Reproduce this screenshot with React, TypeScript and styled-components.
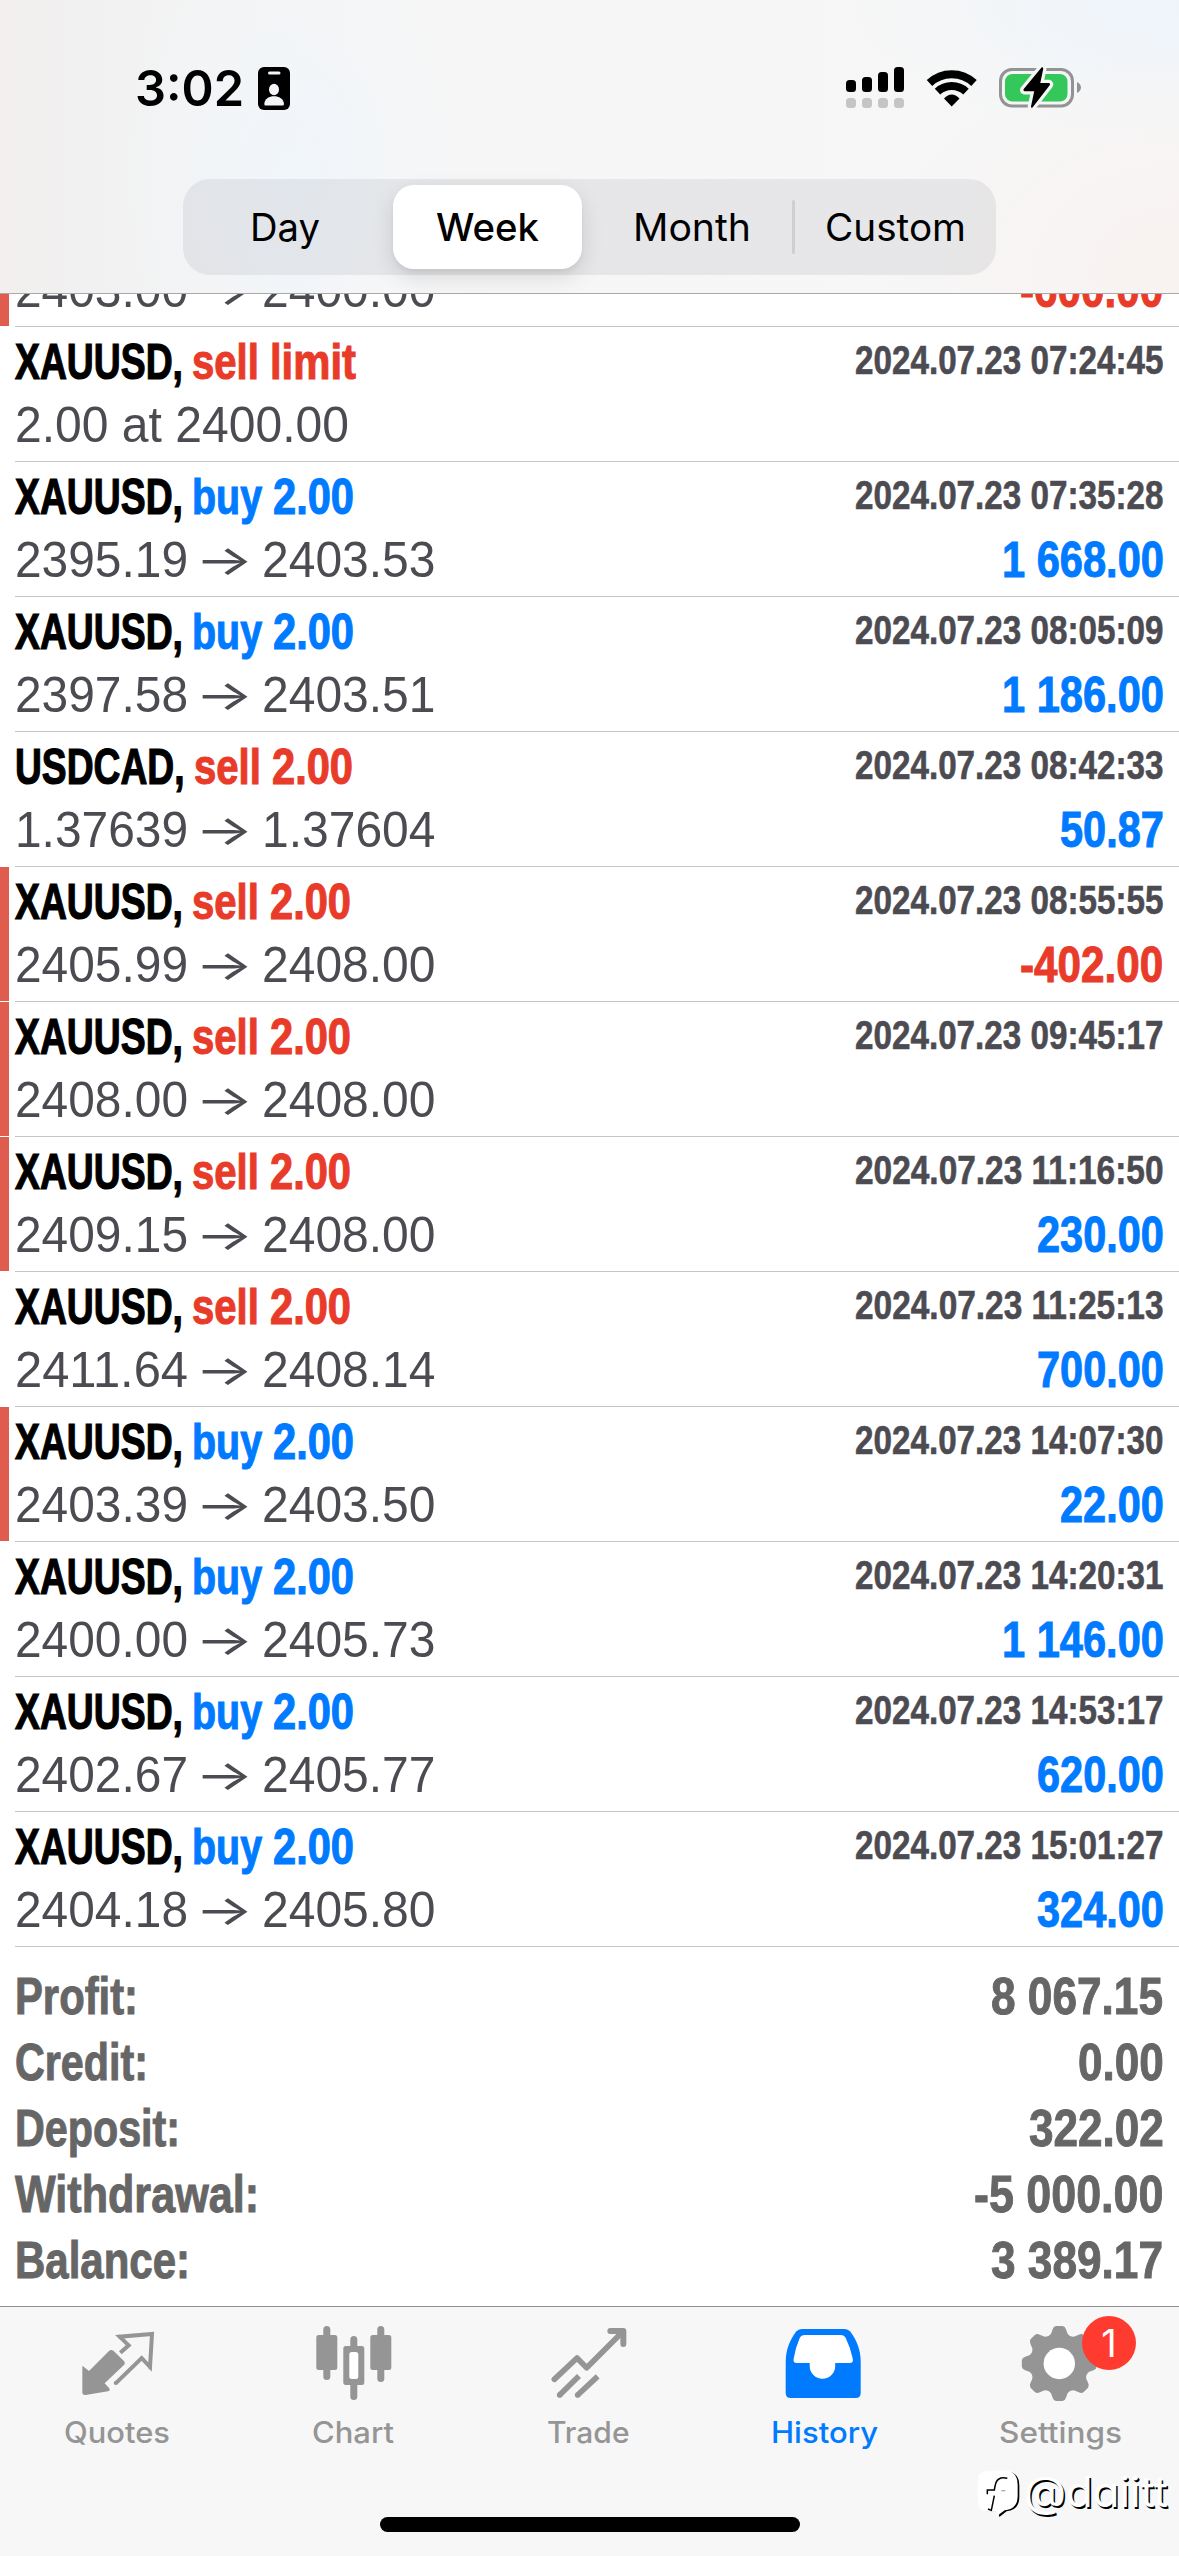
import React, { useLayoutEffect, useRef } from "react";
import styled, { createGlobalStyle } from "styled-components";

const RED = "#e83b2a";
const BLUE = "#007aff";
const SLATE = "#4c4b52";
const GREY = "#666666";
const TAB_GREY = "#959595";

const GlobalStyle = createGlobalStyle`
  *, *::before, *::after { box-sizing: border-box; }
  body { margin: 0; background: #ffffff; }
`;

/* ---------- text fitted to a given advance width ---------- */

const FitBox = styled.span<{ $w: number }>`
  display: inline-block;
  flex: none;
  width: ${(p) => p.$w}px;
  white-space: pre;
  overflow: visible;
`;

const FitInner = styled.span`
  display: inline-block;
  white-space: pre;
  transform-origin: 0 50%;
`;

function Fit({ w, children }: { w: number; children: React.ReactNode }) {
  const ref = useRef<HTMLSpanElement>(null);
  useLayoutEffect(() => {
    const el = ref.current;
    if (!el) return;
    el.style.transform = "none";
    const natural = el.getBoundingClientRect().width;
    el.style.transform = `scaleX(${w / natural})`;
  }, [w, children]);
  return (
    <FitBox $w={w}>
      <FitInner ref={ref}>{children}</FitInner>
    </FitBox>
  );
}

/* Advance width of a condensed numeral string for a given em size. */
function numeralWidth(text: string, em: number) {
  const units: Record<string, number> = { ".": 0.243, " ": 0.25, "-": 0.34 };
  return [...text].reduce((sum, c) => sum + (units[c] ?? 0.48) * em, 0);
}

/* ---------- page ---------- */

const Screen = styled.main`
  width: 1179px;
  height: 2556px;
  display: flex;
  flex-direction: column;
  position: relative;
  overflow: hidden;
  background: #ffffff;
  font-family: "Liberation Sans", Arial, sans-serif;
`;

const Header = styled.header`
  flex: none;
  height: 294px;
  display: flex;
  flex-direction: column;
  border-bottom: 1px solid #a9a9a9;
  font-family: Inter, sans-serif;
  background:
    radial-gradient(ellipse 300px 220px at 1179px 270px, rgba(249, 242, 240, 0.9), rgba(249, 242, 240, 0)),
    radial-gradient(ellipse 330px 150px at 1179px 0, rgba(238, 244, 251, 1), rgba(238, 244, 251, 0)),
    radial-gradient(ellipse 180px 260px at 290px 170px, rgba(241, 246, 251, 1), rgba(241, 246, 251, 0)),
    linear-gradient(90deg, #f2efee 0, #f1f1f1 90px, #f6f6f6 360px, #f7f7f7 100%);
`;

const StatusBar = styled.div`
  height: 179px;
  flex: none;
  display: flex;
  align-items: flex-start;
  padding: 0 97px 0 135px;
`;

const Clock = styled.div`
  height: 176px;
  line-height: 176px;
  font-size: 50px;
  font-weight: 600;
  color: #000;
`;

const IdIcon = styled.svg`
  flex: none;
  margin: 67px 0 0 14px;
`;

const StatusIcons = styled.div`
  margin-left: auto;
  display: flex;
  padding-top: 66px;
  gap: 20px;
`;

const Segments = styled.nav`
  flex: none;
  width: 813px;
  height: 96px;
  margin-left: 183px;
  padding: 6px 0;
  display: flex;
  align-items: center;
  border-radius: 27px;
  background: rgba(118, 118, 128, 0.12);
`;

const Segment = styled.div<{ $active?: boolean; $w: number; $inset?: number }>`
  flex: none;
  width: ${(p) => p.$w}px;
  height: 84px;
  margin-left: ${(p) => (p.$active ? 7 : 0)}px;
  padding-left: ${(p) => p.$inset ?? 0}px;
  display: flex;
  align-items: center;
  justify-content: center;
  border-radius: 21px;
  font-size: 38px;
  line-height: 86px;
  color: #000;
  font-weight: ${(p) => (p.$active ? 540 : 430)};
  background: ${(p) => (p.$active ? "#fff" : "transparent")};
  box-shadow: ${(p) => (p.$active ? "0 8px 22px rgba(0,0,0,.12), 0 4px 5px rgba(0,0,0,.04)" : "none")};
`;

const Divider = styled.div`
  flex: none;
  width: 3px;
  height: 54px;
  border-radius: 2px;
  background: #cfcfd2;
`;

/* ---------- history list ---------- */

const List = styled.section`
  flex: none;
  height: 1653px;
  overflow: hidden;
  display: flex;
  flex-direction: column;
  justify-content: flex-end;
`;

const Row = styled.article`
  flex: none;
  height: 135px;
  display: flex;
`;

const Marker = styled.div<{ $on?: boolean }>`
  flex: none;
  width: 9px;
  height: 134px;
  margin-right: 6px;
  background: ${(p) => (p.$on ? "#df5c4e" : "transparent")};
`;

const RowBody = styled.div`
  flex: 1;
  padding-right: 15.5px;
  border-bottom: 1px solid #c5c5c7;
`;

const TitleLine = styled.div`
  display: flex;
  height: 67px;
  line-height: 69px;
  font-size: 49.5px;
  font-weight: 700;
`;

const Symbol = styled.span`
  color: #000;
  margin-right: 9px;
  -webkit-text-stroke: 1.2px #000;
`;

const Side = styled.span<{ $color: string }>`
  display: flex;
  color: ${(p) => p.$color};
  -webkit-text-stroke: 1.1px ${(p) => p.$color};
`;

const Time = styled.time`
  margin-left: auto;
  font-size: 40px;
  line-height: 67px;
  color: ${SLATE};
  -webkit-text-stroke: 0.6px ${SLATE};
`;

const PriceLine = styled.div`
  display: flex;
  height: 60px;
  margin-left: -0.5px;
  line-height: 62px;
  font-size: 49.5px;
  color: ${SLATE};
`;

const Arrow = styled.span`
  font-family: Inter, sans-serif;
  font-weight: 400;
  font-size: 42px;
  margin: 0 9px 0 7px;
`;

const Amount = styled.span<{ $color: string }>`
  margin-left: auto;
  font-weight: 700;
  color: ${(p) => p.$color};
  -webkit-text-stroke: 1px ${(p) => p.$color};
`;

type Direction = "sell" | "buy";
type Deal = {
  symbol?: string;
  side?: Direction;
  volume?: string;
  time?: string;
  from?: string;
  to?: string;
  note?: string;
  amount?: string;
  marked?: boolean;
};

const deals: Deal[] = [
  { from: "2403.00", to: "2400.00", amount: "-600.00", marked: true },
  { symbol: "XAUUSD", side: "sell", volume: "limit", time: "2024.07.23 07:24:45", note: "2.00 at 2400.00" },
  { symbol: "XAUUSD", side: "buy", volume: "2.00", time: "2024.07.23 07:35:28", from: "2395.19", to: "2403.53", amount: "1 668.00" },
  { symbol: "XAUUSD", side: "buy", volume: "2.00", time: "2024.07.23 08:05:09", from: "2397.58", to: "2403.51", amount: "1 186.00" },
  { symbol: "USDCAD", side: "sell", volume: "2.00", time: "2024.07.23 08:42:33", from: "1.37639", to: "1.37604", amount: "50.87" },
  { symbol: "XAUUSD", side: "sell", volume: "2.00", time: "2024.07.23 08:55:55", from: "2405.99", to: "2408.00", amount: "-402.00", marked: true },
  { symbol: "XAUUSD", side: "sell", volume: "2.00", time: "2024.07.23 09:45:17", from: "2408.00", to: "2408.00", marked: true },
  { symbol: "XAUUSD", side: "sell", volume: "2.00", time: "2024.07.23 11:16:50", from: "2409.15", to: "2408.00", amount: "230.00", marked: true },
  { symbol: "XAUUSD", side: "sell", volume: "2.00", time: "2024.07.23 11:25:13", from: "2411.64", to: "2408.14", amount: "700.00" },
  { symbol: "XAUUSD", side: "buy", volume: "2.00", time: "2024.07.23 14:07:30", from: "2403.39", to: "2403.50", amount: "22.00", marked: true },
  { symbol: "XAUUSD", side: "buy", volume: "2.00", time: "2024.07.23 14:20:31", from: "2400.00", to: "2405.73", amount: "1 146.00" },
  { symbol: "XAUUSD", side: "buy", volume: "2.00", time: "2024.07.23 14:53:17", from: "2402.67", to: "2405.77", amount: "620.00" },
  { symbol: "XAUUSD", side: "buy", volume: "2.00", time: "2024.07.23 15:01:27", from: "2404.18", to: "2405.80", amount: "324.00" },
];

function DealRow({ deal }: { deal: Deal }) {
  const { symbol, side, volume, time, from, to, note, amount, marked } = deal;
  return (
    <Row>
      <Marker $on={marked} />
      <RowBody>
        <TitleLine>
          {symbol && (
            <>
              <Symbol>
                <Fit w={symbol === "USDCAD" ? 169.5 : 168}>{symbol + ","}</Fit>
              </Symbol>
              <Side $color={side === "sell" ? RED : BLUE}>
                <Fit w={side === "sell" ? 78 : 81}>{side + " "}</Fit>
                <Fit w={volume === "limit" ? 86 : 81}>{volume}</Fit>
              </Side>
              <Time>
                <Fit w={308.5}>{time}</Fit>
              </Time>
            </>
          )}
        </TitleLine>
        <PriceLine>
          {note ? (
            <Fit w={334}>{note}</Fit>
          ) : (
            <>
              <Fit w={173}>{from}</Fit>
              <Arrow>
                <Fit w={58.5}>→</Fit>
              </Arrow>
              <Fit w={173.5}>{to}</Fit>
            </>
          )}
          {amount && (
            <Amount $color={amount.startsWith("-") ? RED : BLUE}>
              <Fit w={numeralWidth(amount, 48)}>{amount}</Fit>
            </Amount>
          )}
        </PriceLine>
      </RowBody>
    </Row>
  );
}

/* ---------- summary ---------- */

const Summary = styled.section`
  flex: none;
  height: 359px;
  padding: 16px 15.5px 0 15px;
`;

const SummaryLine = styled.div`
  display: flex;
  justify-content: space-between;
  height: 66px;
  line-height: 66px;
  font-size: 52.5px;
  font-weight: 700;
  color: ${GREY};
  -webkit-text-stroke: 1px ${GREY};
`;

const totals = [
  { label: "Profit:", w: 123, value: "8 067.15" },
  { label: "Credit:", w: 133, value: "0.00" },
  { label: "Deposit:", w: 165, value: "322.02" },
  { label: "Withdrawal:", w: 244, value: "-5 000.00" },
  { label: "Balance:", w: 175, value: "3 389.17" },
];

/* ---------- tab bar ---------- */

const TabBar = styled.footer`
  flex: none;
  height: 250px;
  display: flex;
  flex-direction: column;
  align-items: center;
  background: #f7f7f7;
  border-top: 1px solid #8e8e8e;
  font-family: Inter, sans-serif;
`;

const Tabs = styled.nav`
  width: 100%;
  height: 210px;
  display: flex;
  padding-top: 8px;
`;

const Tab = styled.div<{ $active?: boolean }>`
  flex: 1 1 0;
  display: flex;
  flex-direction: column;
  align-items: center;
  color: ${(p) => (p.$active ? BLUE : TAB_GREY)};
  font-size: 29.5px;
  font-weight: 500;
  line-height: 34px;
`;

const TabLabel = styled.div`
  padding-right: 2px;
`;

const IconBox = styled.div`
  position: relative;
  width: 100px;
  height: 90px;
  margin-bottom: 10px;
`;

const Badge = styled.span`
  position: absolute;
  left: 71px;
  top: 1px;
  width: 54px;
  height: 54px;
  border-radius: 50%;
  background: #ff3b30;
  color: #fff;
  font-size: 38px;
  font-weight: 400;
  line-height: 54px;
  text-align: center;
`;

const HomeIndicator = styled.div`
  width: 420px;
  height: 15px;
  border-radius: 8px;
  background: #000;
`;

const Watermark = styled.div`
  position: absolute;
  left: 976px;
  top: 2467px;
  display: flex;
  font-family: Inter, sans-serif;
  font-size: 42px;
  font-weight: 400;
  line-height: 50px;
  color: #fff;
  font-feature-settings: "cv11" 1;
  text-shadow: 1.5px 1.5px 0.6px #000;
`;

function gearPath(cx: number, cy: number) {
  const pts: string[] = [];
  const at = (deg: number, r: number) => {
    const a = (deg * Math.PI) / 180;
    return `${(cx + r * Math.sin(a)).toFixed(2)} ${(cy - r * Math.cos(a)).toFixed(2)}`;
  };
  for (let i = 0; i < 8; i++) {
    const d = i * 45;
    pts.push(`${i ? "L" : "M"}${at(d - 15.5, 31)}`);
    pts.push(`L${at(d - 11, 34.8)} Q${at(d - 9, 37.5)} ${at(d - 5, 37.6)}`);
    pts.push(`L${at(d + 5, 37.6)} Q${at(d + 9, 37.5)} ${at(d + 11, 34.8)}`);
    pts.push(`L${at(d + 15.5, 31)} Q${at(d + 22.5, 28.3)} ${at(d + 29.5, 31)}`);
  }
  return pts.join(" ") + "Z";
}

const QuotesIcon = () => (
  <svg width="100" height="90" viewBox="-6 0 300 270">
    <path d="M37 152 L57 168 L117 108 Q124 102 131 108 L161 137 Q168 144 161 151 L104 205 L119 221 Q121 227 114 229 L47 240 Q37 241 37 232Z" fill="currentColor" />
    <path d="M151 113 L176 91 L149 65 L246 57 L240 156 L215 129 L137 205" fill="none" stroke="currentColor" strokeWidth="12" strokeLinejoin="miter" />
    <circle cx="149" cy="65" r="6" fill="currentColor" />
    <circle cx="240" cy="155" r="6.5" fill="currentColor" />
    <circle cx="137" cy="204" r="6" fill="currentColor" />
  </svg>
);

const ChartIcon = () => (
  <svg width="100" height="90" viewBox="303.7 2315 100 90" fill="currentColor">
    <rect x="323" y="2326" width="7" height="54" rx="3.5" />
    <rect x="316" y="2335" width="21" height="35" rx="2.5" />
    <rect x="377" y="2326" width="7" height="56" rx="3.5" />
    <rect x="370" y="2335" width="21" height="35" rx="2.5" />
    <rect x="350" y="2336" width="7" height="64" rx="3.5" />
    <rect x="343" y="2346" width="21" height="39" rx="2.5" />
    <rect x="349" y="2352" width="9" height="27" rx="2.5" fill="#fff" />
  </svg>
);

const TradeIcon = () => (
  <svg width="100" height="90" viewBox="-1 0 300 270" fill="none" stroke="currentColor" strokeWidth="17">
    <path d="M45 193 L113 129 L142 158 L250 50" strokeLinecap="round" strokeLinejoin="round" />
    <path d="M213 48 H252 V87" strokeWidth="18" strokeLinecap="round" strokeLinejoin="round" />
    <circle cx="61" cy="240" r="8.5" fill="currentColor" stroke="none" />
    <circle cx="115" cy="240" r="8.5" fill="currentColor" stroke="none" />
    <path d="M61 240 L119 183 M115 240 L175 184" />
  </svg>
);

const HistoryIcon = () => (
  <svg width="100" height="90" viewBox="775.3 2315 100 90">
    <path d="M786 2362 C786 2350 790 2340 796.5 2331.5 Q798.5 2329 802 2329 H845 Q848.5 2329 850.5 2331.5 C857 2340 861 2350 861 2362 V2393 Q861 2398 856 2398 H791 Q786 2398 786 2393Z" fill="currentColor" />
    <path d="M805 2335 H841 Q844.5 2335 846 2338 Q850.5 2347 853 2358.5 Q854 2363 850 2363 H835.5 V2366 A12.75 12.75 0 0 1 810 2366 V2363 H797 Q793 2363 794 2358.5 Q796 2347 800 2338 Q801.5 2335 805 2335Z" fill="#fff" />
  </svg>
);

const SettingsIcon = () => (
  <svg width="100" height="90" viewBox="0 0 100 90">
    <path d={gearPath(48.3, 48.5)} fill="currentColor" />
    <circle cx="48.3" cy="48.5" r="15.7" fill="#fff" />
  </svg>
);

const tabs = [
  { label: "Quotes", w: 106, icon: <QuotesIcon /> },
  { label: "Chart", w: 82, icon: <ChartIcon /> },
  { label: "Trade", w: 82.5, icon: <TradeIcon /> },
  { label: "History", w: 107, icon: <HistoryIcon />, active: true },
  { label: "Settings", w: 123, icon: <SettingsIcon />, badge: "1" },
];

const CellularIcon = () => (
  <svg width="61" height="44" viewBox="845 66 61 44">
    {[80, 77, 72, 67].map((top, i) => (
      <g key={top}>
        <rect x={846 + i * 16} y={top} width="10" height={92 - top} rx="3.5" fill="#000" />
        <rect x={846 + i * 16} y="98" width="10" height="10" rx="3.5" fill="#c5c5c5" />
      </g>
    ))}
  </svg>
);

const WifiIcon = () => (
  <svg width="52" height="44" viewBox="926 66 52 44" fill="none" stroke="#000" strokeWidth="8">
    <path d="M929.5 83 A32.5 32.5 0 0 1 974 83" />
    <path d="M937.5 91.6 A21 21 0 0 1 966 91.6" />
    <path d="M944 98.5 Q951.7 90.5 959.5 98.5 L951.7 106.5Z" fill="#000" stroke="none" />
  </svg>
);

const BatteryIcon = () => (
  <svg width="84" height="44" viewBox="998 66 84 44">
    <rect x="1000.5" y="69.5" width="72" height="36.5" rx="11.5" fill="none" stroke="#939393" strokeWidth="3" />
    <path d="M1077 82 C1082.3 84.5 1082.3 90.5 1077 93Z" fill="#939393" />
    <rect x="1005" y="74" width="62.5" height="27.5" rx="7.5" fill="#34c759" />
    <path d="M1041.5 67.5 Q1043.5 66.5 1043.2 69 L1040.3 83 H1048.5 Q1051 83.5 1049.5 85.5 L1032.5 107.5 Q1031 108.5 1031 106.5 L1034.2 91.3 H1024.5 Q1022.5 90.5 1023.7 89Z" fill="#000" stroke="#f6f6f7" strokeWidth="6.5" paintOrder="stroke" strokeLinejoin="round" />
  </svg>
);

export default function App() {
  return (
    <>
      <GlobalStyle />
      <Screen>
        <Header>
          <StatusBar>
            <Clock>
              <Fit w={109}>3:02</Fit>
            </Clock>
            <IdIcon width="32" height="43" viewBox="0 0 32 43">
              <rect width="32" height="43" rx="6" fill="#000" />
              <rect x="10" y="4.5" width="12.5" height="3" rx="1.5" fill="#f4f5f8" />
              <ellipse cx="16" cy="22.5" rx="5" ry="5.7" fill="#f4f5f8" />
              <path d="M6.3 37 C6.5 26.5 25.5 26.5 26 37 Q26 38.5 24.5 38.5 H7.5 Q6.3 38.5 6.3 37Z" fill="#f4f5f8" />
            </IdIcon>
            <StatusIcons>
              <CellularIcon />
              <WifiIcon />
              <BatteryIcon />
            </StatusIcons>
          </StatusBar>
          <Segments>
            <Segment $w={203}><Fit w={70}>Day</Fit></Segment>
            <Segment $w={189} $active><Fit w={103}>Week</Fit></Segment>
            <Segment $w={210} $inset={10}><Fit w={118}>Month</Fit></Segment>
            <Divider />
            <Segment $w={201}><Fit w={141}>Custom</Fit></Segment>
          </Segments>
        </Header>

        <List>
          {deals.map((deal, i) => (
            <DealRow key={i} deal={deal} />
          ))}
        </List>

        <Summary>
          {totals.map((t) => (
            <SummaryLine key={t.label}>
              <Fit w={t.w}>{t.label}</Fit>
              <Fit w={numeralWidth(t.value, 51)}>{t.value}</Fit>
            </SummaryLine>
          ))}
        </Summary>

        <TabBar>
          <Tabs>
            {tabs.map((t) => (
              <Tab key={t.label} $active={t.active}>
                <IconBox>
                  {t.icon}
                  {t.badge && <Badge>{t.badge}</Badge>}
                </IconBox>
                <TabLabel>
                  <Fit w={t.w}>{t.label}</Fit>
                </TabLabel>
              </Tab>
            ))}
          </Tabs>
          <HomeIndicator />
        </TabBar>

        <Watermark>
          <svg width="48" height="52" viewBox="48 534 144 156">
            <path d="M84 549 H150 Q178 555 178 590 V625 Q178 662 140 667 L118 684 L114 667 H88 Q58 667 58 630 V580 Q58 549 84 549Z" fill="#000" />
            <path d="M84 545 H142 Q173 550 173 588 V622 Q173 660 134 664 L112 680 L108 668 H82 Q53 668 53 625 V580 Q53 545 84 545Z" fill="#fff" />
            <path d="M142 568 Q110 560 105 592 L103 603 H82 V616 M103 620 L94 664 L84 660" fill="none" stroke="#000" strokeWidth="4.5" />
            <path d="M124 605 H136" fill="none" stroke="#aaa" strokeWidth="4" />
          </svg>
          <Fit w={144}>@daiitt</Fit>
        </Watermark>
      </Screen>
    </>
  );
}
